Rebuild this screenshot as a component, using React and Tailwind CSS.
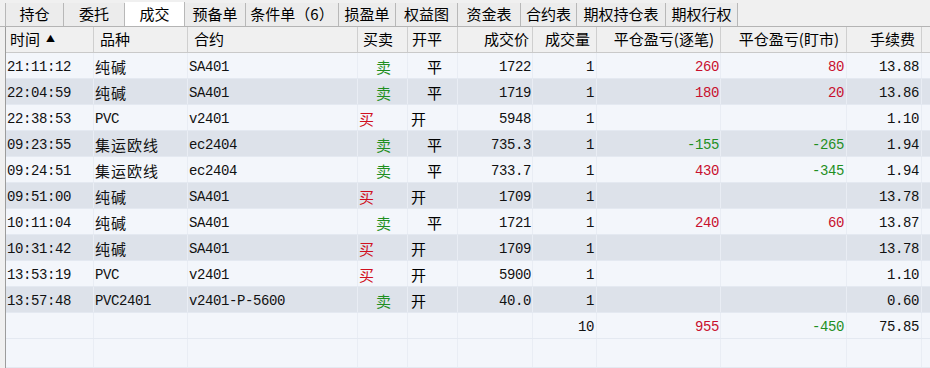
import React from "react";

const tabs = [
  { label: "持仓", w: "w-[59px]" },
  { label: "委托", w: "w-[61px]" },
  { label: "成交", w: "w-[60px]", active: true },
  { label: "预备单", w: "w-[61px]" },
  { label: "条件单（6）", w: "w-[93px]" },
  { label: "损盈单", w: "w-[57px]" },
  { label: "权益图", w: "w-[62px]" },
  { label: "资金表", w: "w-[63px]" },
  { label: "合约表", w: "w-[56px]" },
  { label: "期权持仓表", w: "w-[89px]" },
  { label: "期权行权", w: "w-[72px]" },
];

// widths include the 1px right border
const columns = [
  { title: "时间", w: "w-[88px]", head: "justify-start pl-[4px]", cell: "justify-start pl-[1px]" },
  { title: "品种", w: "w-[94px]", head: "justify-start pl-[6px]", cell: "justify-start pl-[1px]" },
  { title: "合约", w: "w-[170px]", head: "justify-start pl-[6px]", cell: "justify-start pl-[1px]" },
  { title: "买卖", w: "w-[50px]", head: "justify-start pl-[5px]", cell: "justify-start" },
  { title: "开平", w: "w-[50px]", head: "justify-start pl-[4px]", cell: "justify-start" },
  { title: "成交价", w: "w-[75px]", head: "justify-end pr-[3px]", cell: "justify-end pr-[1px]" },
  { title: "成交量", w: "w-[64px]", head: "justify-end pr-[6px]", cell: "justify-end pr-[2px]" },
  { title: "平仓盈亏(逐笔)", w: "w-[124px]", head: "justify-end pr-[6px]", cell: "justify-end pr-[1px]" },
  { title: "平仓盈亏(盯市)", w: "w-[126px]", head: "justify-end pr-[7px]", cell: "justify-end pr-[2px]" },
  { title: "手续费", w: "w-[75px]", head: "justify-end pr-[6px]", cell: "justify-end pr-[2px]" },
];

const trades = [
  ["21:11:12", "纯碱", "SA401", "卖", "平", "1722", "1", "260", "80", "13.88"],
  ["22:04:59", "纯碱", "SA401", "卖", "平", "1719", "1", "180", "20", "13.86"],
  ["22:38:53", "PVC", "v2401", "买", "开", "5948", "1", "", "", "1.10"],
  ["09:23:55", "集运欧线", "ec2404", "卖", "平", "735.3", "1", "-155", "-265", "1.94"],
  ["09:24:51", "集运欧线", "ec2404", "卖", "平", "733.7", "1", "430", "-345", "1.94"],
  ["09:51:00", "纯碱", "SA401", "买", "开", "1709", "1", "", "", "13.78"],
  ["10:11:04", "纯碱", "SA401", "卖", "平", "1721", "1", "240", "60", "13.87"],
  ["10:31:42", "纯碱", "SA401", "买", "开", "1709", "1", "", "", "13.78"],
  ["13:53:19", "PVC", "v2401", "买", "开", "5900", "1", "", "", "1.10"],
  ["13:57:48", "PVC2401", "v2401-P-5600", "卖", "开", "40.0", "1", "", "", "0.60"],
];

const total = ["", "", "", "", "", "", "10", "955", "-450", "75.85"];

const isCJK = (s) => /[\u4e00-\u9fff]/.test(s);

const RED = "text-[#c8102e]";
const GREEN = "text-[#1f8f1f]";

const CellText = ({ value, index }) => {
  if (!value) return null;
  if (index === 3) {
    const buy = value === "买";
    return (
      <span className={`font-['Noto_Sans_CJK_SC',sans-serif] text-[15px] ${buy ? "pl-[1px] text-[#d01020]" : "pl-[18px] text-[#1f8f1f]"}`}>
        {value}
      </span>
    );
  }
  if (index === 4) {
    const open = value === "开";
    return (
      <span className={`font-['Noto_Sans_CJK_SC',sans-serif] text-[15px] text-black ${open ? "pl-[3px]" : "pl-[19px]"}`}>
        {value}
      </span>
    );
  }
  let color = "text-[#111]";
  if (index === 7 || index === 8) color = value.startsWith("-") ? GREEN : RED;
  if (isCJK(value)) {
    return <span className={`font-['Noto_Sans_CJK_SC',sans-serif] text-[15px] tracking-[1px] ${color}`}>{value}</span>;
  }
  return <span className={`font-['Liberation_Mono',monospace] text-[14px] tracking-[-0.4px] ${color}`}>{value}</span>;
};

const Row = ({ cells, gray, tall }) => (
  <div className={`flex ${tall ? "flex-1" : "h-[26px]"} border-b border-[#e4e9f1] ${gray ? "bg-[#dde2ea]" : "bg-[#f3f6fb]"}`}>
    {columns.map((c, i) => (
      <div key={c.title} className={`${c.w} ${c.cell} flex items-center pt-[3px] shrink-0 border-r border-[#e9edf4] whitespace-nowrap overflow-hidden`}>
        <CellText value={cells[i]} index={i} />
      </div>
    ))}
    <div className="flex-1" />
  </div>
);

export default function App() {
  return (
    <div className="w-[930px] h-[368px] bg-[#f0f0f0] overflow-hidden flex flex-col font-['Noto_Sans_CJK_SC',sans-serif]">
      {/* Tabs */}
      <div className="h-[27px] shrink-0 flex items-end border-b border-[#b4b4b4] pl-[5px]">
        {tabs.map((t, i) => (
          <div
            key={t.label}
            className={`${t.w} h-[23px] flex items-center justify-center text-[15px] text-black border-r border-[#b8b8b8] ${i === 0 ? "border-l" : ""} ${t.active ? "bg-white h-[24px]" : "bg-[#ececec]"}`}>
            {t.label}
          </div>
        ))}
      </div>

      {/* Table */}
      <div className="flex-1 flex flex-col ml-[5px] border-l border-[#9c9c9c]">
        <div className="h-[26px] shrink-0 flex bg-[#f0f0f0] border-b border-[#c9c9c9]">
          {columns.map((c, i) => (
            <div key={c.title} className={`${c.w} ${c.head} shrink-0 flex items-center border-r border-[#cfcfcf] text-[15px] text-black whitespace-nowrap`}>
              {c.title}
              {i === 0 && <span className="ml-[6px] text-[9px] leading-none mb-[2px]">▲</span>}
            </div>
          ))}
          <div className="flex-1" />
        </div>
        {trades.map((r, i) => (
          <Row key={r[0]} cells={r} gray={i % 2 === 1} />
        ))}
        <Row cells={total} gray={false} />
        <Row cells={[]} gray={false} tall />
      </div>
    </div>
  );
}
